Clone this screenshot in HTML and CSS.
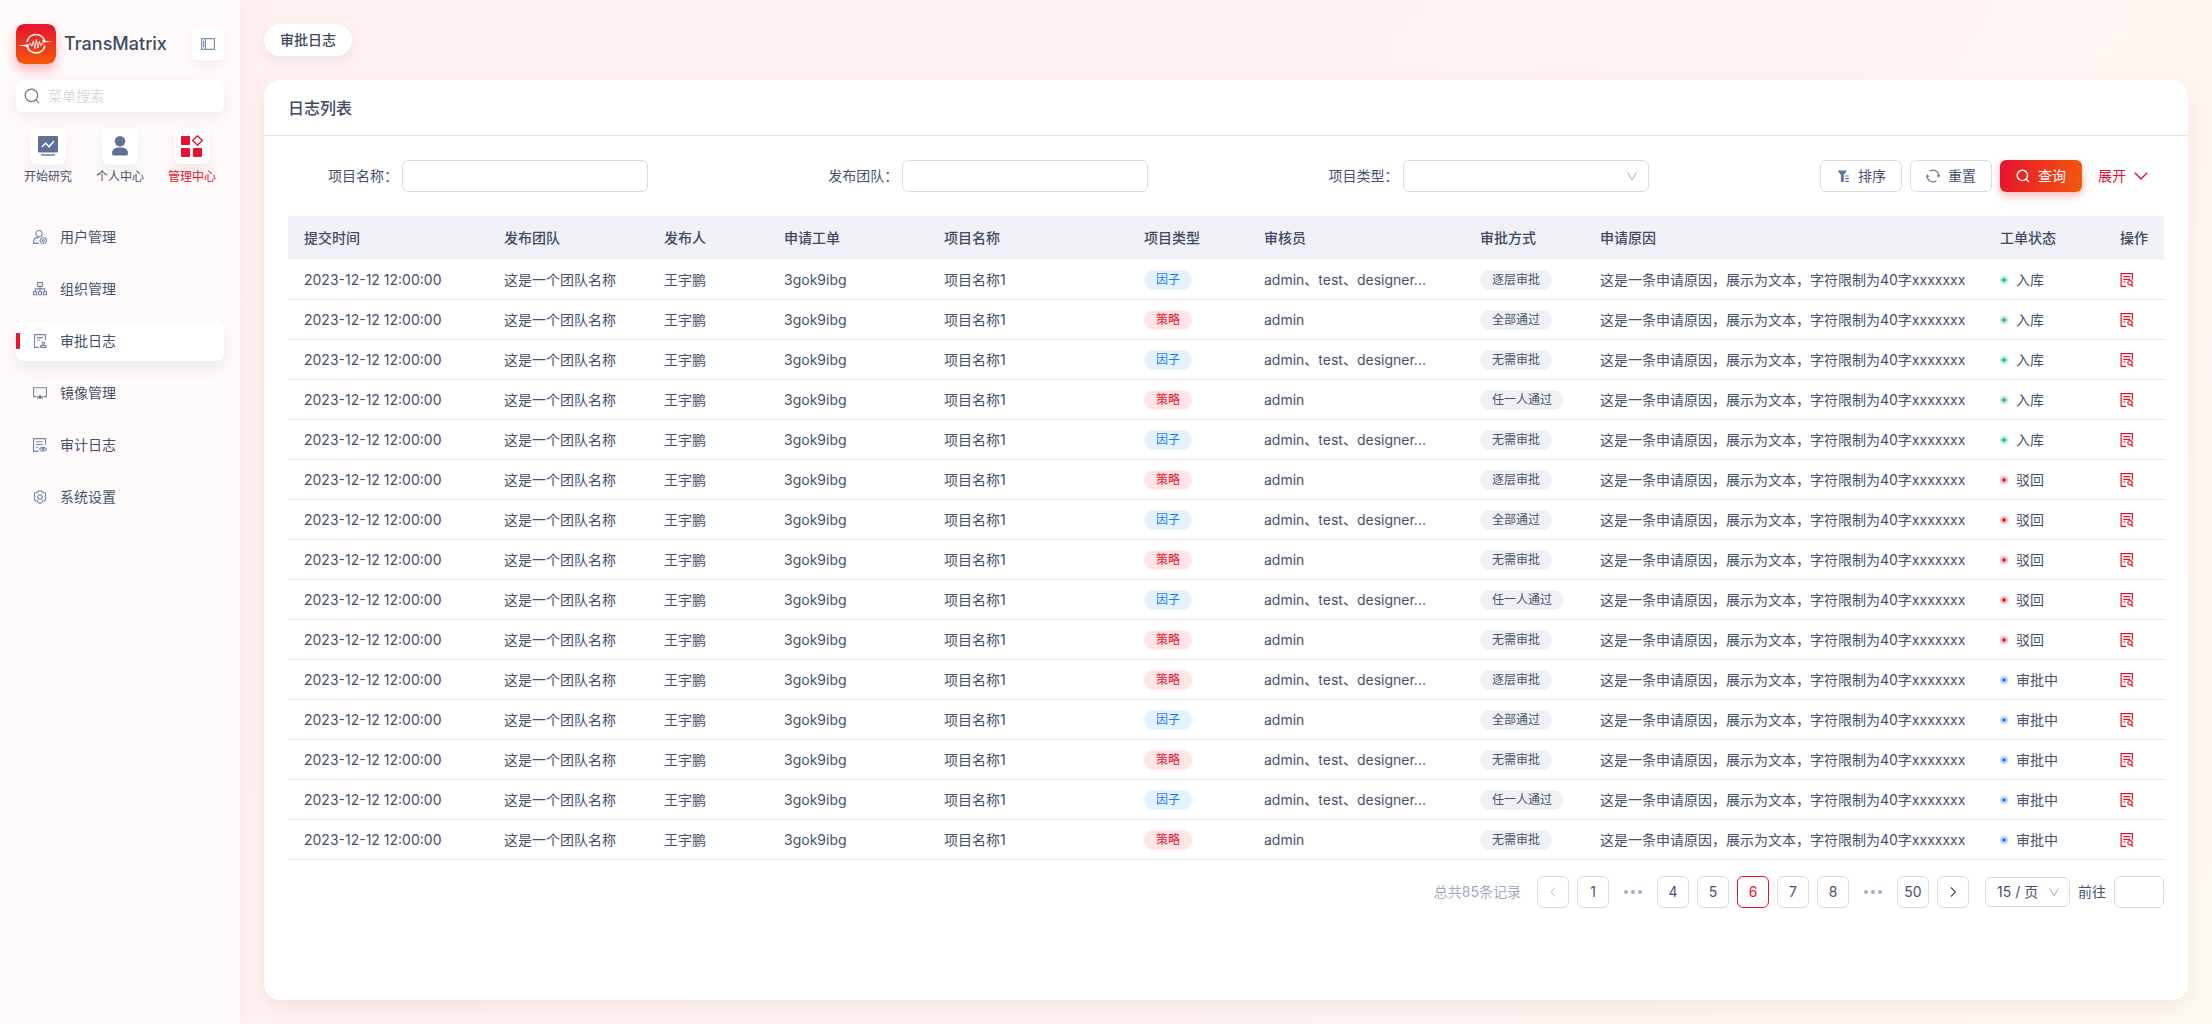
FILE: index.html
```html
<!DOCTYPE html>
<html lang="zh-CN">
<head>
<meta charset="utf-8">
<meta name="viewport" content="width=device-width, initial-scale=1">
<title>TransMatrix - 审批日志</title>
<link rel="stylesheet" href="styles.css">
</head>
<body>
<div class="layout">
  <aside class="sidebar">
    <div class="brand">
      <svg class="logo" viewBox="0 0 40 40" aria-hidden="true">
        <defs><linearGradient id="logo-fill" x1="0" y1="0" x2="0" y2="1"><stop offset="0" stop-color="#e5132f"/><stop offset="1" stop-color="#f3590c"/></linearGradient></defs>
        <rect width="40" height="40" rx="8" fill="url(#logo-fill)"/>
        <g fill="none" stroke="#fff" stroke-linecap="round" stroke-linejoin="round">
          <path d="M11.2 17.2A9 9 0 0 1 28.6 17.2M28.8 22.2A9 9 0 0 1 11.4 22.4" stroke-width="1.7"/>
          <path d="M12.8 20.8l1.600-1.600 1.400 3 1.600-5.400 1.400 8 1.600-9.400 1.400 8.600 1.600-6.600 1.400 4.400 1.200-2.600 1.200 1" stroke-width=".9"/>
        </g>
        <path d="M2 21.600l8.600-1.200 2.200.2.200 2.600-2.400.2L9.400 22.200zM37.200 17.400l-8.600 1.200-2-.2-.4-2 2.400-.4 1.400 1.200z" fill="#fff"/>
      </svg>
      <span class="brand-name">TransMatrix</span>
      <button class="collapse" type="button" aria-label="收起菜单">
        <svg class="icon" viewBox="0 0 14 14" fill="none" stroke="#8093b3" stroke-width="1.200"><path d="M.6 1.600h12.800v10.800H.6zM4.400 1.600v10.800M2.500 3.800v6.400"/></svg>
      </button>
    </div>
    <label class="search">
      <svg class="icon-search" viewBox="0 0 16 16" fill="none" stroke="#637799" stroke-width="1.200" stroke-linecap="round"><circle cx="7.400" cy="7.400" r="6.200"/><path d="M11.900 11.900l2.900 2.900"/></svg>
      <input type="text" placeholder="菜单搜索" aria-label="菜单搜索">
    </label>
    <nav class="quick" aria-label="快捷入口">
      <a href="#research"><span class="tile"><svg viewBox="0 0 20 20"><rect width="20" height="16.500" y="0" rx="1.200" fill="#5f7296"/><path d="M4 11l3.700-4 3.300 3.800 4.700-5.600" fill="none" stroke="#fff" stroke-width="1.500"/><path d="M3 18.900h14" stroke="#5f7296" stroke-width="1.400"/></svg></span>开始研究</a>
      <a href="#profile"><span class="tile"><svg viewBox="0 0 20 20" fill="#5f7296"><circle cx="10" cy="5.300" r="5.300"/><path d="M2 17.600c0-3.800 2.600-6 6-6h4c3.400 0 6 2.200 6 6 0 1.200-.6 1.900-1.700 1.900H3.700c-1.100 0-1.700-.7-1.700-1.900z"/></svg></span>个人中心</a>
      <a class="current" href="#admin"><span class="tile"><svg viewBox="0 0 22 22" fill="#e5132f"><rect y="1" width="9" height="9" rx="1"/><rect y="13" width="9" height="9" rx="1"/><rect x="12" y="13" width="9" height="9" rx="1"/><path d="M16.500.7l4.800 4.800-4.800 4.800-4.800-4.800z" fill="none" stroke="#e5132f" stroke-width="1.300" stroke-linejoin="round"/></svg></span>管理中心</a>
    </nav>
    <nav class="menu" aria-label="管理中心">
      <a href="#users"><svg class="icon" viewBox="0 0 14 14"><circle cx="6" cy="3.600" r="3.100"/><path d="M6 13.400H.6v-1.500c0-2.600 1.600-4.300 4-4.300h1.200"/><circle cx="10.300" cy="10.500" r="1"/><path d="M6.900 10.500l1.700-2.700h3.400l1.700 2.700-1.700 2.800H8.600z"/></svg>用户管理</a>
      <a href="#orgs"><svg class="icon" viewBox="0 0 14 14"><path d="M4.600.6h4.800v3.800H4.600zM7 4.400v5M2.200 9.400V6.900h9.600v2.500M.6 9.800h3v3h-3zM5.500 9.800h3v3h-3zM10.400 9.800h3v3h-3z"/></svg>组织管理</a>
      <a class="active" href="#approval"><svg class="icon" viewBox="0 0 14 14"><path d="M6.200 13.400H1.600V.6h10.800v5.600M4 3.600h6M4 6h3"/><circle cx="10.300" cy="8.900" r="1.200"/><path d="M10.300 10.100v1.300M7.700 13.400v-1.900h5.200v1.900z"/></svg>审批日志</a>
      <a href="#images"><svg class="icon" viewBox="0 0 14 14"><path d="M3.600 10.600H.6V1.700h12.800v8.900h-3"/><path class="solid" d="M7 8.600l1 1.600h1.200l.8 2.300H4l.8-2.300H6z"/></svg>镜像管理</a>
      <a href="#audit"><svg class="icon" viewBox="0 0 14 14"><path d="M5.600 13.400H.6V.6h11.800v6.200M3.200 3.700h6.600M3.200 6.500h6.600M3.200 9.300h2.200M6.400 11.200c1.800-2.700 5.400-2.700 7.200 0-1.800 2.500-5.400 2.500-7.200 0z"/><circle cx="10" cy="11.100" r=".9"/></svg>审计日志</a>
      <a href="#settings"><svg class="icon" viewBox="0 0 14 14"><path d="M5.300 1.300L7 .5l1.700.8.8 1 1.400.1 1.500 1 .3 1.800-.5 1.100.5 1.800-.3 1.800-1.500 1-1.400.1-.8 1.400-1.700.9-1.700-.9-.8-1.400-1.400-.1-1.500-1-.3-1.800.5-1.800-.5-1.100.3-1.800 1.500-1 1.400-.1z"/><circle cx="7" cy="7" r="2.300"/></svg>系统设置</a>
    </nav>
  </aside>

  <main class="content">
    <a class="tab" href="#approval">审批日志</a>
    <section class="card">
      <h1 class="card-title">日志列表</h1>
      <div class="card-body">
        <form class="filters">
          <div class="field"><label for="f-name">项目名称：</label><input id="f-name" type="text"></div>
          <div class="field"><label for="f-team">发布团队：</label><input id="f-team" type="text"></div>
          <div class="field"><label for="f-type">项目类型：</label>
            <span class="select"><select id="f-type"><option></option><option>因子</option><option>策略</option></select>
            <svg class="caret" viewBox="0 0 10 10"><path d="M.5 1.500l4.500 7 4.500-7"/></svg></span></div>
          <div class="actions">
            <button class="btn" type="button"><svg class="icon" viewBox="0 0 14 14"><path class="solid" d="M1.500 1.500h9.600L7.800 6v7H4.900V6z"/><path d="M9.200 7h3.600M9.200 9.700h3.600M9.200 12.400h3.600"/></svg>排序</button>
            <button class="btn" type="reset"><svg class="icon" viewBox="0 0 14 14"><path d="M3.600 2.300A5.700 5.700 0 0 1 12.700 7M10.400 11.700A5.700 5.700 0 0 1 1.300 7"/><path class="solid" d="M10.600 6.200h3.900l-1.900 2.500zM-.5 7.800h3.900L1.400 5.300z"/></svg>重置</button>
            <button class="btn primary" type="submit"><svg class="icon" viewBox="0 0 14 14"><circle cx="6.400" cy="6.400" r="5.200"/><path d="M10.200 10.200l2.800 2.800"/></svg>查询</button>
            <button class="expand" type="button">展开<svg class="icon" viewBox="0 0 14 14"><path d="M.8 3.800L7 10l6.200-6.200"/></svg></button>
          </div>
        </form>

        <table class="log">
          <colgroup><col class="w200"><col class="w160"><col class="w120"><col class="w160"><col class="w200"><col class="w120"><col class="w216"><col class="w120"><col><col class="w120"><col class="w60"></colgroup>
          <thead><tr><th>提交时间</th><th>发布团队</th><th>发布人</th><th>申请工单</th><th>项目名称</th><th>项目类型</th><th>审核员</th><th>审批方式</th><th>申请原因</th><th>工单状态</th><th>操作</th></tr></thead>
          <tbody id="log-rows"></tbody>
        </table>

        <nav class="pager" aria-label="分页">
          <span class="total">总共85条记录</span>
          <div class="pages">
            <button type="button" disabled aria-label="上一页"><svg viewBox="0 0 14 14"><path d="M9 2.500L5 7l4 4.500"/></svg></button>
            <button type="button">1</button>
            <span class="more"><i></i><i></i><i></i></span>
            <button type="button">4</button>
            <button type="button">5</button>
            <button class="on" type="button" aria-current="page">6</button>
            <button type="button">7</button>
            <button type="button">8</button>
            <span class="more"><i></i><i></i><i></i></span>
            <button type="button">50</button>
            <button type="button" aria-label="下一页"><svg viewBox="0 0 14 14"><path d="M5 2.500L9.500 7 5 11.500"/></svg></button>
          </div>
          <div class="jump">
            <span class="select size"><select aria-label="每页条数"><option>15 / 页</option><option>30 / 页</option></select>
            <svg class="caret" viewBox="0 0 10 10"><path d="M.5 1.500l4.500 7 4.500-7"/></svg></span>
            <label for="goto">前往</label><input id="goto" type="text">
          </div>
        </nav>
      </div>
    </section>
  </main>
</div>
<svg class="sprite" aria-hidden="true"><symbol id="i-view" viewBox="0 0 14 14"><path d="M6 13.400H1.100V.6h11.300v6.200M3.300 3.600h6.900M3.300 6.300h6.900M3.300 9h2.200M11.600 11.800l1.600 1.900"/><circle cx="10" cy="9.700" r="2.200"/></symbol></svg>
<script src="rows.js"></script>
</body>
</html>
```
FILE: styles.css
```css
*, ::before { box-sizing: border-box; }
body {
  margin: 0;
  font: 14px/20px Inter, "Noto Sans CJK SC", sans-serif;
  color: #46526a;
  background: linear-gradient(120deg, #fff1f0 0%, #fff3f1 60%, #fff9f3 100%);
}
button, input, select { font: inherit; color: inherit; }
button { cursor: pointer; }
a { color: inherit; text-decoration: none; }
svg { display: block; flex: none; }
.sprite { display: none; }
.icon { width: 14px; height: 14px; overflow: visible; }
.layout { display: flex; min-height: 100vh; }

.sidebar {
  flex: none;
  width: 240px;
  padding: 24px 16px;
  background: rgba(255, 255, 255, .65);
  box-shadow: 4px 0 16px rgba(90, 30, 30, .03);
}
.brand { display: flex; align-items: center; gap: 8px; }
.logo { width: 40px; height: 40px; border-radius: 8px; box-shadow: 0 6px 12px rgba(229, 19, 47, .3); }
.brand-name { font-size: 18px; line-height: 24px; font-weight: 500; color: #3e4a61; }
.collapse {
  display: grid;
  place-items: center;
  width: 32px;
  height: 32px;
  margin-left: auto;
  padding: 0;
  border: 0;
  border-radius: 6px;
  background: #fff;
  box-shadow: 0 6px 12px rgba(40, 40, 70, .07);
}
.search {
  display: flex;
  align-items: center;
  gap: 8px;
  height: 32px;
  margin-top: 16px;
  padding: 0 8px;
  border-radius: 6px;
  background: #fff;
  box-shadow: 0 6px 16px rgba(40, 40, 70, .07);
}
.icon-search { width: 16px; height: 16px; }
.search input { flex: 1; min-width: 0; padding: 0; border: 0; background: none; outline: 0; }
.search input::placeholder { color: #d5dae5; opacity: 1; }
.quick { display: flex; justify-content: space-between; margin-top: 16px; }
.quick a { display: flex; flex-direction: column; align-items: center; gap: 4px; width: 64px; font-size: 12px; line-height: 18px; }
.tile { display: grid; place-items: center; width: 36px; height: 36px; border-radius: 6px; background: #fff; box-shadow: 0 6px 12px rgba(40, 40, 70, .07); }
.tile svg { width: 20px; height: 20px; }
.quick .current { color: #e5132f; }
.current .tile { box-shadow: 0 6px 12px rgba(229, 19, 47, .1); }
.current .tile svg { width: 22px; height: 22px; }

.menu { display: flex; flex-direction: column; gap: 12px; margin-top: 31px; }
.menu a { display: flex; align-items: center; gap: 13px; height: 40px; padding-left: 17px; border-radius: 8px; }
.menu svg { fill: none; stroke: #7385a8; stroke-width: 1.1; }
.solid { fill: #637799; stroke: none; }
.menu .active { padding-left: 0; background: #fff; box-shadow: 0 8px 16px rgba(40, 40, 70, .08); }
.menu .active::before { content: ""; width: 4px; height: 16px; border-radius: 1px; background: #e5132f; }

.content { display: flex; flex: 1; flex-direction: column; align-items: stretch; gap: 24px; min-width: 0; padding: 24px; }
.tab {
  align-self: flex-start;
  padding: 6px 16px;
  border-radius: 16px;
  background: #fff;
  color: #3e4a61;
  font-weight: 500;
  box-shadow: 0 6px 12px rgba(40, 40, 70, .07);
}
.card { flex: 1; border-radius: 16px; background: #fff; box-shadow: 0 8px 20px rgba(90, 50, 30, .08); }
.card-title { margin: 0; padding: 16px 24px 15px; border-bottom: 1px solid #e4e5e9; font-size: 16px; line-height: 24px; font-weight: 500; color: #3e4a61; }
.card-body { padding: 24px; }

.filters { display: grid; grid-template-columns: 4fr 4fr 4fr 3fr; margin-bottom: 24px; }
.field { display: flex; align-items: center; gap: 4px; }
.field label { width: 110px; text-align: right; }
.field input, .field .select { width: 246px; }
input[id], select { height: 32px; padding: 0 8px; border: 1px solid #d7dbe6; border-radius: 6px; background: #fff; outline: 0; }
.select { position: relative; display: block; }
.select select { display: block; width: 100%; appearance: none; }
.caret { position: absolute; top: 50%; right: 12px; width: 10px; height: 10px; margin-top: -5px; fill: none; stroke: #9aa6bd; pointer-events: none; }
.actions { display: flex; justify-content: flex-end; gap: 8px; }
.btn {
  display: flex;
  align-items: center;
  gap: 8px;
  height: 32px;
  padding: 0 15px;
  border: 1px solid #d7dbe6;
  border-radius: 6px;
  background: #fff;
  white-space: nowrap;
}
.btn svg { fill: none; stroke: #637799; stroke-width: 1.2; }
.btn.primary { padding: 0 16px; border: 0; background: linear-gradient(100deg, #e5132f, #f3590c); color: #fff; box-shadow: 0 4px 10px rgba(229, 19, 47, .3); }
.btn.primary svg { stroke: #fff; stroke-width: 1.4; }
.btn .solid { stroke: none; }
.expand { display: flex; align-items: center; gap: 8px; padding: 0 16px 0 8px; border: 0; background: none; color: #e5132f; white-space: nowrap; }
.expand svg { fill: none; stroke: #e5132f; stroke-width: 1.5; }

.log { width: 100%; border-collapse: separate; border-spacing: 0; table-layout: fixed; }
.w60 { width: 60px; }
.w120 { width: 120px; }
.w160 { width: 160px; }
.w200 { width: 200px; }
.w216 { width: 216px; }
.log th, .log td { padding: 0 0 0 16px; text-align: left; white-space: nowrap; }
.log th { height: 44px; background: #f0f1f6; color: #3e4a61; font-weight: 500; }
.log td { height: 40px; border-bottom: 1px solid #e4e5e9; }
.tag { display: inline-block; padding: 0 12px; border-radius: 10px; background: #f0f1f6; font-size: 12px; line-height: 20px; vertical-align: middle; }
.tag.factor { background: #e5f3ff; color: #1a78ff; }
.tag.strategy { background: #ffe5e5; color: #e5132f; }
.status { display: flex; align-items: center; gap: 8px; }
.status::before { content: ""; width: 8px; height: 8px; border: 2px solid; border-radius: 50%; }
.stored::before { border-color: #b9ecd2; background: #12b76a; background-clip: padding-box; }
.rejected::before { border-color: #fbb9be; background: #e5132f; background-clip: padding-box; }
.pending::before { border-color: #b5dbff; background: #1a78ff; background-clip: padding-box; }
.view { display: block; padding: 0; border: 0; background: none; }
.view svg { fill: none; stroke: #e5132f; stroke-width: 1.2; }

.pager { display: flex; justify-content: flex-end; align-items: center; gap: 16px; margin-top: 16px; }
.total { color: #a0abc0; }
.pages, .jump { display: flex; align-items: center; gap: 8px; }
.pages button { display: grid; place-items: center; width: 32px; height: 32px; padding: 0; border: 1px solid #d7dbe6; border-radius: 6px; background: #fff; }
.pages .on { border-color: #e5132f; color: #e5132f; }
.pages svg { width: 14px; height: 14px; fill: none; stroke: #46526a; stroke-width: 1.2; }
.pages button:disabled svg { stroke: #d0d6e2; }
.more { display: flex; justify-content: center; gap: 3px; width: 32px; }
.more i { width: 4px; height: 4px; border-radius: 50%; background: #a0abc4; }
.size { width: 85px; }
.size select { height: 30px; padding: 0 11px; }
.size .caret { right: 11px; }
#goto { width: 50px; }
```
FILE: rows.js
```js
const F = ['因子', 'factor'];
const S = ['策略', 'strategy'];
const MANY = 'admin、test、designer...';
const ONE = 'admin';
const IN = ['入库', 'stored'];
const NO = ['驳回', 'rejected'];
const WAIT = ['审批中', 'pending'];

const logs = [
  [F, MANY, '逐层审批', IN],
  [S, ONE, '全部通过', IN],
  [F, MANY, '无需审批', IN],
  [S, ONE, '任一人通过', IN],
  [F, MANY, '无需审批', IN],
  [S, ONE, '逐层审批', NO],
  [F, MANY, '全部通过', NO],
  [S, ONE, '无需审批', NO],
  [F, MANY, '任一人通过', NO],
  [S, ONE, '无需审批', NO],
  [S, MANY, '逐层审批', WAIT],
  [F, ONE, '全部通过', WAIT],
  [S, MANY, '无需审批', WAIT],
  [F, MANY, '任一人通过', WAIT],
  [S, ONE, '无需审批', WAIT],
];

document.getElementById('log-rows').innerHTML = logs.map(([type, reviewers, mode, status]) => `
  <tr>
    <td>2023-12-12 12:00:00</td><td>这是一个团队名称</td><td>王宇鹏</td><td>3gok9ibg</td><td>项目名称1</td>
    <td><span class="tag ${type[1]}">${type[0]}</span></td>
    <td>${reviewers}</td>
    <td><span class="tag">${mode}</span></td>
    <td>这是一条申请原因，展示为文本，字符限制为40字xxxxxxx</td>
    <td><span class="status ${status[1]}">${status[0]}</span></td>
    <td><button class="view" type="button" aria-label="查看"><svg class="icon"><use href="#i-view"/></svg></button></td>
  </tr>`).join('');
```
